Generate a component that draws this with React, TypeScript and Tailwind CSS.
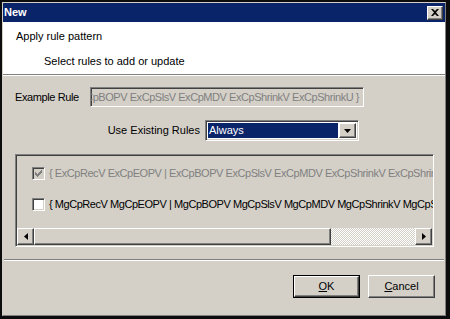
import React from "react"

const font = { fontFamily: '"Liberation Sans", Arial, sans-serif' }

function Raised({ className = "", children }: { className?: string; children?: React.ReactNode }) {
  return (
    <div
      className={`border border-t-white border-l-white border-r-[#404040] border-b-[#404040] bg-[#d4d0c8] shadow-[inset_-1px_-1px_0_#808080] ${className}`}
    >
      {children}
    </div>
  )
}

function Check({ checked, disabled }: { checked?: boolean; disabled?: boolean }) {
  return (
    <div
      className={`w-[13px] h-[13px] shrink-0 border border-t-[#808080] border-l-[#808080] border-r-white border-b-white shadow-[inset_1px_1px_0_#404040,inset_-1px_-1px_0_#d4d0c8] flex items-center justify-center ${
        disabled ? "bg-[#d4d0c8]" : "bg-white"
      }`}
    >
      {checked && (
        <svg width="7" height="7" viewBox="0 0 7 7">
          <path d="M0 2h1v1h1v1h1V3h1V2h1V1h1V0h1v3H6v1H5v1H4v1H3v1H2V6H1V5H0z" fill={disabled ? "#808080" : "#000"} />
        </svg>
      )}
    </div>
  )
}

export default function App() {
  return (
    <div className="w-[450px] h-[319px] bg-[#0c0c0c] pl-[2px] pt-[2px] pr-[4px] pb-[3px] text-[11px] text-black" style={font}>
      <div className="w-full h-full border border-t-[#d4d0c8] border-l-[#d4d0c8] border-r-[#808080] border-b-[#808080] bg-[#d4d0c8] flex flex-col">
        {/* title bar */}
        <div className="h-[19px] bg-[#0a246a] flex items-center justify-between pl-[1px] pr-[2px] shrink-0">
          <span className="text-white font-bold text-[11px]">New</span>
          <Raised className="w-[16px] h-[14px] flex items-center justify-center">
            <svg width="8" height="7" viewBox="0 0 8 7">
              <path d="M0 0h2l2 2 2-2h2L5 3.5 8 7H6L4 5 2 7H0l3-3.5z" fill="#000" />
            </svg>
          </Raised>
        </div>

        {/* header */}
        <div className="h-[53px] bg-white border-b border-b-[#808080] shrink-0">
          <div className="pl-[13px] pt-[8px] leading-[13px]">Apply rule pattern</div>
          <div className="pl-[41px] pt-[12px] leading-[13px]">Select rules to add or update</div>
        </div>
        <div className="h-px bg-white shrink-0" />

        {/* body */}
        <div className="flex flex-col px-[12px]">
          <div className="flex items-center mt-[11px] h-[20px]">
            <span className="w-[75px] tracking-[-0.4px]">Example Rule</span>
            <div className="w-[274px] h-[20px] border border-t-[#808080] border-l-[#808080] border-r-white border-b-white shadow-[inset_1px_1px_0_#404040,inset_-1px_-1px_0_#d4d0c8] bg-[#d4d0c8] overflow-hidden flex justify-end items-center pr-[4px]">
              <span className="whitespace-nowrap text-[#808080] tracking-[-0.45px]">
                {"CpBOPV ExCpSlsV ExCpMDV ExCpShrinkV ExCpShrinkU }"}
              </span>
            </div>
          </div>

          <div className="flex items-center mt-[13px] h-[21px]">
            <span className="w-[190px] text-right pr-[5px]">Use Existing Rules</span>
            <div className="w-[154px] h-[21px] border border-t-[#808080] border-l-[#808080] border-r-white border-b-white shadow-[inset_1px_1px_0_#404040,inset_-1px_-1px_0_#d4d0c8] bg-white flex p-[2px] gap-px">
              <div className="flex-1 bg-[#0a246a] text-white flex items-center pl-[1px]">Always</div>
              <Raised className="w-[17px] h-full flex items-center justify-center">
                <svg width="7" height="4" viewBox="0 0 7 4">
                  <path d="M0 0h7L3.5 4z" fill="#000" />
                </svg>
              </Raised>
            </div>
          </div>

          <div className="mt-[13px] w-[419px] h-[93px] border border-t-[#808080] border-l-[#808080] border-r-white border-b-white shadow-[inset_1px_1px_0_#404040] flex flex-col">
            <div className="flex-1 pt-[12px] pl-[16px] overflow-hidden flex flex-col gap-[18px]">
              <div className="flex items-center gap-[4px] h-[13px]">
                <Check checked disabled />
                <span className="whitespace-nowrap text-[#808080] tracking-[-0.45px]">
                  {"{ ExCpRecV ExCpEOPV | ExCpBOPV ExCpSlsV ExCpMDV ExCpShrinkV ExCpShrinkU }"}
                </span>
              </div>
              <div className="flex items-center gap-[4px] h-[13px]">
                <Check />
                <span className="whitespace-nowrap tracking-[-0.45px]">
                  {"{ MgCpRecV MgCpEOPV | MgCpBOPV MgCpSlsV MgCpMDV MgCpShrinkV MgCpShrinkU }"}
                </span>
              </div>
            </div>
            <div className="h-[17px] flex ml-px mr-px mb-px shrink-0">
              <Raised className="w-[17px] h-full flex items-center justify-center">
                <svg width="4" height="7" viewBox="0 0 4 7">
                  <path d="M4 0v7L0 3.5z" fill="#000" />
                </svg>
              </Raised>
              <Raised className="w-[297px] h-full" />
              <div className="flex-1 h-full bg-[repeating-conic-gradient(#ffffff_0_25%,#d4d0c8_0_50%)] bg-[length:2px_2px]" />
              <Raised className="w-[17px] h-full flex items-center justify-center">
                <svg width="4" height="7" viewBox="0 0 4 7">
                  <path d="M0 0v7L4 3.5z" fill="#000" />
                </svg>
              </Raised>
            </div>
          </div>
        </div>

        <div className="mt-[12px] mx-px h-px bg-[#808080]" />
        <div className="mx-px h-px bg-white" />

        <div className="flex justify-end gap-[8px] mt-[14px] pr-[10px]">
          <div className="w-[67px] h-[23px] border border-black">
            <Raised className="w-full h-full flex items-center justify-center">
              <span>
                <u>O</u>K
              </span>
            </Raised>
          </div>
          <Raised className="w-[67px] h-[23px] flex items-center justify-center">
            <span>
              <u>C</u>ancel
            </span>
          </Raised>
        </div>
      </div>
    </div>
  )
}
